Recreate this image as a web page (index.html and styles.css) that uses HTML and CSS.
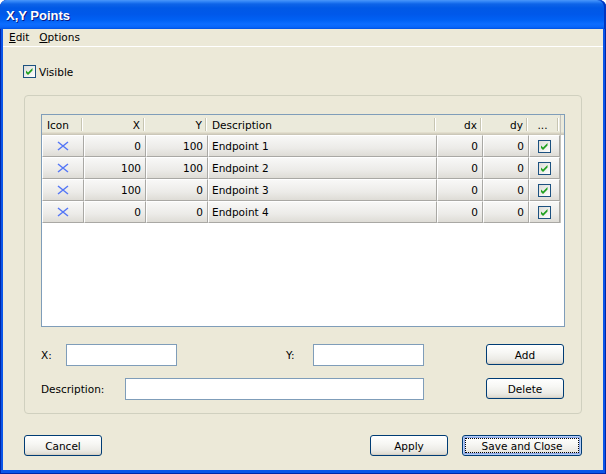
FILE: index.html
```html
<!DOCTYPE html>
<html>
<head>
<meta charset="utf-8">
<title>X,Y Points</title>
<link rel="stylesheet" href="styles.css">
</head>
<body>
<div class="window">
  <div class="titlebar"><span class="title">X,Y Points</span></div>
  <div class="client">
    <div class="menubar">
      <span class="menu"><u>E</u>dit</span>
      <span class="menu"><u>O</u>ptions</span>
    </div>
    <label class="visible">
      <span class="chk"><svg width="11" height="11" viewBox="0 0 11 11"><polygon points="2,4.5 4,6.5 8.5,2 8.5,4.6 4,9.1 2,7.1" fill="#21a121"/></svg></span>
      <span>Visible</span>
    </label>
    <div class="group">
      <div class="grid">
        <div class="hrow">
          <div class="h c-icon left">Icon</div>
          <div class="h c-x">X</div>
          <div class="h c-y">Y</div>
          <div class="h c-desc left">Description</div>
          <div class="h c-dx">dx</div>
          <div class="h c-dy">dy</div>
          <div class="h c-chk center">...</div>
          <div class="filler"></div>
        </div>
        <div class="row">
          <div class="cell c-icon center"><svg class="xicon" width="12" height="10" viewBox="0 0 12 10"><path d="M1 1 L11 9 M11 1 L1 9" stroke="#5577f6" stroke-width="1.5" fill="none"/></svg></div>
          <div class="cell c-x">0</div>
          <div class="cell c-y">100</div>
          <div class="cell c-desc left">Endpoint 1</div>
          <div class="cell c-dx">0</div>
          <div class="cell c-dy">0</div>
          <div class="cell c-chk center"><span class="chk"><svg width="11" height="11" viewBox="0 0 11 11"><polygon points="2,4.5 4,6.5 8.5,2 8.5,4.6 4,9.1 2,7.1" fill="#21a121"/></svg></span></div>
          <div class="filler"></div>
        </div>
        <div class="row">
          <div class="cell c-icon center"><svg class="xicon" width="12" height="10" viewBox="0 0 12 10"><path d="M1 1 L11 9 M11 1 L1 9" stroke="#5577f6" stroke-width="1.5" fill="none"/></svg></div>
          <div class="cell c-x">100</div>
          <div class="cell c-y">100</div>
          <div class="cell c-desc left">Endpoint 2</div>
          <div class="cell c-dx">0</div>
          <div class="cell c-dy">0</div>
          <div class="cell c-chk center"><span class="chk"><svg width="11" height="11" viewBox="0 0 11 11"><polygon points="2,4.5 4,6.5 8.5,2 8.5,4.6 4,9.1 2,7.1" fill="#21a121"/></svg></span></div>
          <div class="filler"></div>
        </div>
        <div class="row">
          <div class="cell c-icon center"><svg class="xicon" width="12" height="10" viewBox="0 0 12 10"><path d="M1 1 L11 9 M11 1 L1 9" stroke="#5577f6" stroke-width="1.5" fill="none"/></svg></div>
          <div class="cell c-x">100</div>
          <div class="cell c-y">0</div>
          <div class="cell c-desc left">Endpoint 3</div>
          <div class="cell c-dx">0</div>
          <div class="cell c-dy">0</div>
          <div class="cell c-chk center"><span class="chk"><svg width="11" height="11" viewBox="0 0 11 11"><polygon points="2,4.5 4,6.5 8.5,2 8.5,4.6 4,9.1 2,7.1" fill="#21a121"/></svg></span></div>
          <div class="filler"></div>
        </div>
        <div class="row">
          <div class="cell c-icon center"><svg class="xicon" width="12" height="10" viewBox="0 0 12 10"><path d="M1 1 L11 9 M11 1 L1 9" stroke="#5577f6" stroke-width="1.5" fill="none"/></svg></div>
          <div class="cell c-x">0</div>
          <div class="cell c-y">0</div>
          <div class="cell c-desc left">Endpoint 4</div>
          <div class="cell c-dx">0</div>
          <div class="cell c-dy">0</div>
          <div class="cell c-chk center"><span class="chk"><svg width="11" height="11" viewBox="0 0 11 11"><polygon points="2,4.5 4,6.5 8.5,2 8.5,4.6 4,9.1 2,7.1" fill="#21a121"/></svg></span></div>
          <div class="filler"></div>
        </div>
      </div>
      <div class="fields first">
        <span class="lbl w-x">X:</span>
        <span class="input w-xin"></span>
        <span class="sp w-sp1"></span>
        <span class="lbl w-y">Y:</span>
        <span class="input w-yin"></span>
        <span class="sp w-sp2"></span>
        <button class="btn w-btn">Add</button>
      </div>
      <div class="fields second">
        <span class="lbl w-desc">Description:</span>
        <span class="input w-descin"></span>
        <span class="sp w-sp2"></span>
        <button class="btn w-btn">Delete</button>
      </div>
    </div>
    <div class="actions">
      <button class="btn w-btn">Cancel</button>
      <span class="sp grow"></span>
      <button class="btn w-btn">Apply</button>
      <button class="btn w-save focused">Save and Close</button>
    </div>
  </div>
</div>
</body>
</html>
```

FILE: styles.css
```css
html, body {
  margin: 0;
  padding: 0;
  background: #ffffff;
}

body {
  font-family: "DejaVu Sans", "Liberation Sans", sans-serif;
  font-size: 10.5px;
  color: #000;
}

.window {
  width: 606px;
  height: 474px;
  box-sizing: border-box;
  padding: 0 3px 4px 3px;
  display: flex;
  flex-direction: column;
  background: #0a55e8;
  border-radius: 7px 7px 0 0;
  box-shadow: inset 1px 0 #0026a8, inset -1px 0 #0026a8, inset 0 -1px #0026a8;
}

.titlebar {
  height: 29px;
  flex: 0 0 29px;
  margin: 0 -3px;
  border-radius: 7px 7px 0 0;
  display: flex;
  align-items: center;
  padding-left: 6px;
  background: linear-gradient(to bottom, #4a97fa 0px, #2a7ff5 2px, #0e64e8 4px, #0059e6 8px, #0058ea 14px, #0061f4 20px, #0c6dff 24px, #0866fa 27px, #0052e2 29px);
  box-shadow: inset -2px 0 #0036c0;
}

.title {
  font-family: "Liberation Sans", Arial, sans-serif;
  font-weight: bold;
  font-size: 13px;
  color: #ffffff;
  text-shadow: 1px 1px #0a1883;
  margin-top: 1px;
}

.client {
  flex: 1;
  background: #ece9d8;
  display: flex;
  flex-direction: column;
}

.menubar {
  height: 17px;
  border-bottom: 1px solid #ffffff;
  display: flex;
  align-items: center;
}

.menu {
  padding: 0 4px 0 6px;
  line-height: 17px;
}

.visible {
  margin: 18px 0 0 20px;
  display: flex;
  align-items: center;
  height: 13px;
  gap: 3px;
}

.chk {
  width: 13px;
  height: 13px;
  box-sizing: border-box;
  border: 1px solid #1c5180;
  background: linear-gradient(135deg, #dcdcd7, #ffffff);
  display: inline-flex;
  align-items: center;
  justify-content: center;
}

.chk svg {
  display: block;
}

.group {
  margin: 17px 0 0 21px;
  width: 558px;
  height: 319px;
  box-sizing: border-box;
  border: 1px solid #d0d0bf;
  border-radius: 4px;
  padding: 18px 16px 0 16px;
}

.grid {
  width: 524px;
  height: 213px;
  box-sizing: border-box;
  border: 1px solid #7f9db9;
  background: #ffffff;
  display: flex;
  flex-direction: column;
}

.hrow {
  display: flex;
  height: 20px;
  flex: 0 0 20px;
  background: linear-gradient(#ebeadb 0, #ebeadb 17px, #e2decd 17px, #e2decd 18px, #d6d2c2 18px, #d6d2c2 19px, #cbc7b8 19px);
}

.h {
  box-sizing: border-box;
  height: 20px;
  line-height: 20px;
  text-align: right;
  padding: 0 6px 0 4px;
  background:
    linear-gradient(#c7c5b2, #c7c5b2) no-repeat right 2px top 3px / 1px 13px,
    linear-gradient(#ffffff, #ffffff) no-repeat right 1px top 3px / 1px 13px;
  white-space: nowrap;
}

.row {
  display: flex;
  height: 22px;
  flex: 0 0 22px;
}

.cell {
  box-sizing: border-box;
  height: 22px;
  line-height: 20px;
  text-align: right;
  padding: 0 4px 0 3px;
  border: 1px solid;
  border-color: #ffffff #a9a8a4 #a9a8a4 #ffffff;
  background: linear-gradient(#f8f8f7, #ecebe8 60%, #dedcd6);
  white-space: nowrap;
}

.left {
  text-align: left;
}

.center {
  text-align: center;
}

.cell.center {
  display: flex;
  align-items: center;
  justify-content: center;
  padding: 0;
}

.h.left {
  padding-left: 4px;
}

.h.c-icon {
  padding-left: 5px;
}

.h.center {
  text-align: center;
  padding: 0 4px 0 0;
}

.c-icon { width: 42px; }
.c-x { width: 62px; }
.c-y { width: 62px; }
.c-desc { width: 229px; }
.c-dx { width: 46px; }
.c-dy { width: 46px; }
.c-chk { width: 31px; }

.filler {
  width: 4px;
  box-sizing: border-box;
  border-left: 1px solid #c4c3bd;
}

.xicon {
  display: block;
}

.fields {
  display: flex;
  align-items: flex-start;
  height: 22px;
}

.fields.first {
  margin-top: 17px;
}

.fields.second {
  margin-top: 12px;
}

.lbl {
  line-height: 22px;
  white-space: nowrap;
}

.input {
  height: 22px;
  box-sizing: border-box;
  border: 1px solid #7f9db9;
  background: #ffffff;
}

.sp {
  display: block;
  height: 1px;
}

.w-x { width: 25px; }
.w-xin { width: 111px; }
.w-sp1 { width: 109px; }
.w-y { width: 27px; }
.w-yin { width: 111px; }
.w-sp2 { width: 62px; }
.w-desc { width: 84px; }
.w-descin { width: 299px; }
.w-btn { width: 78px; }
.w-save { width: 120px; }

.btn {
  height: 21px;
  box-sizing: border-box;
  padding: 0;
  margin: 0;
  font-family: inherit;
  font-size: 10.5px;
  color: #000;
  border: 1px solid #003c74;
  border-radius: 3px;
  background: linear-gradient(#ffffff 0%, #f7f7f4 40%, #ecebe6 75%, #dcd8cd 100%);
  box-shadow: inset 0 -1px #d6d0c5;
}

.btn.focused {
  box-shadow: inset 0 0 0 1px #b6cdf5, inset 0 0 0 2px #8aa7e8;
  outline: 1px dotted #000;
  outline-offset: -4px;
}

.actions {
  display: flex;
  align-items: center;
  margin: 21px 21px 0 21px;
  gap: 14px;
}

.grow {
  flex: 1;
}
```
